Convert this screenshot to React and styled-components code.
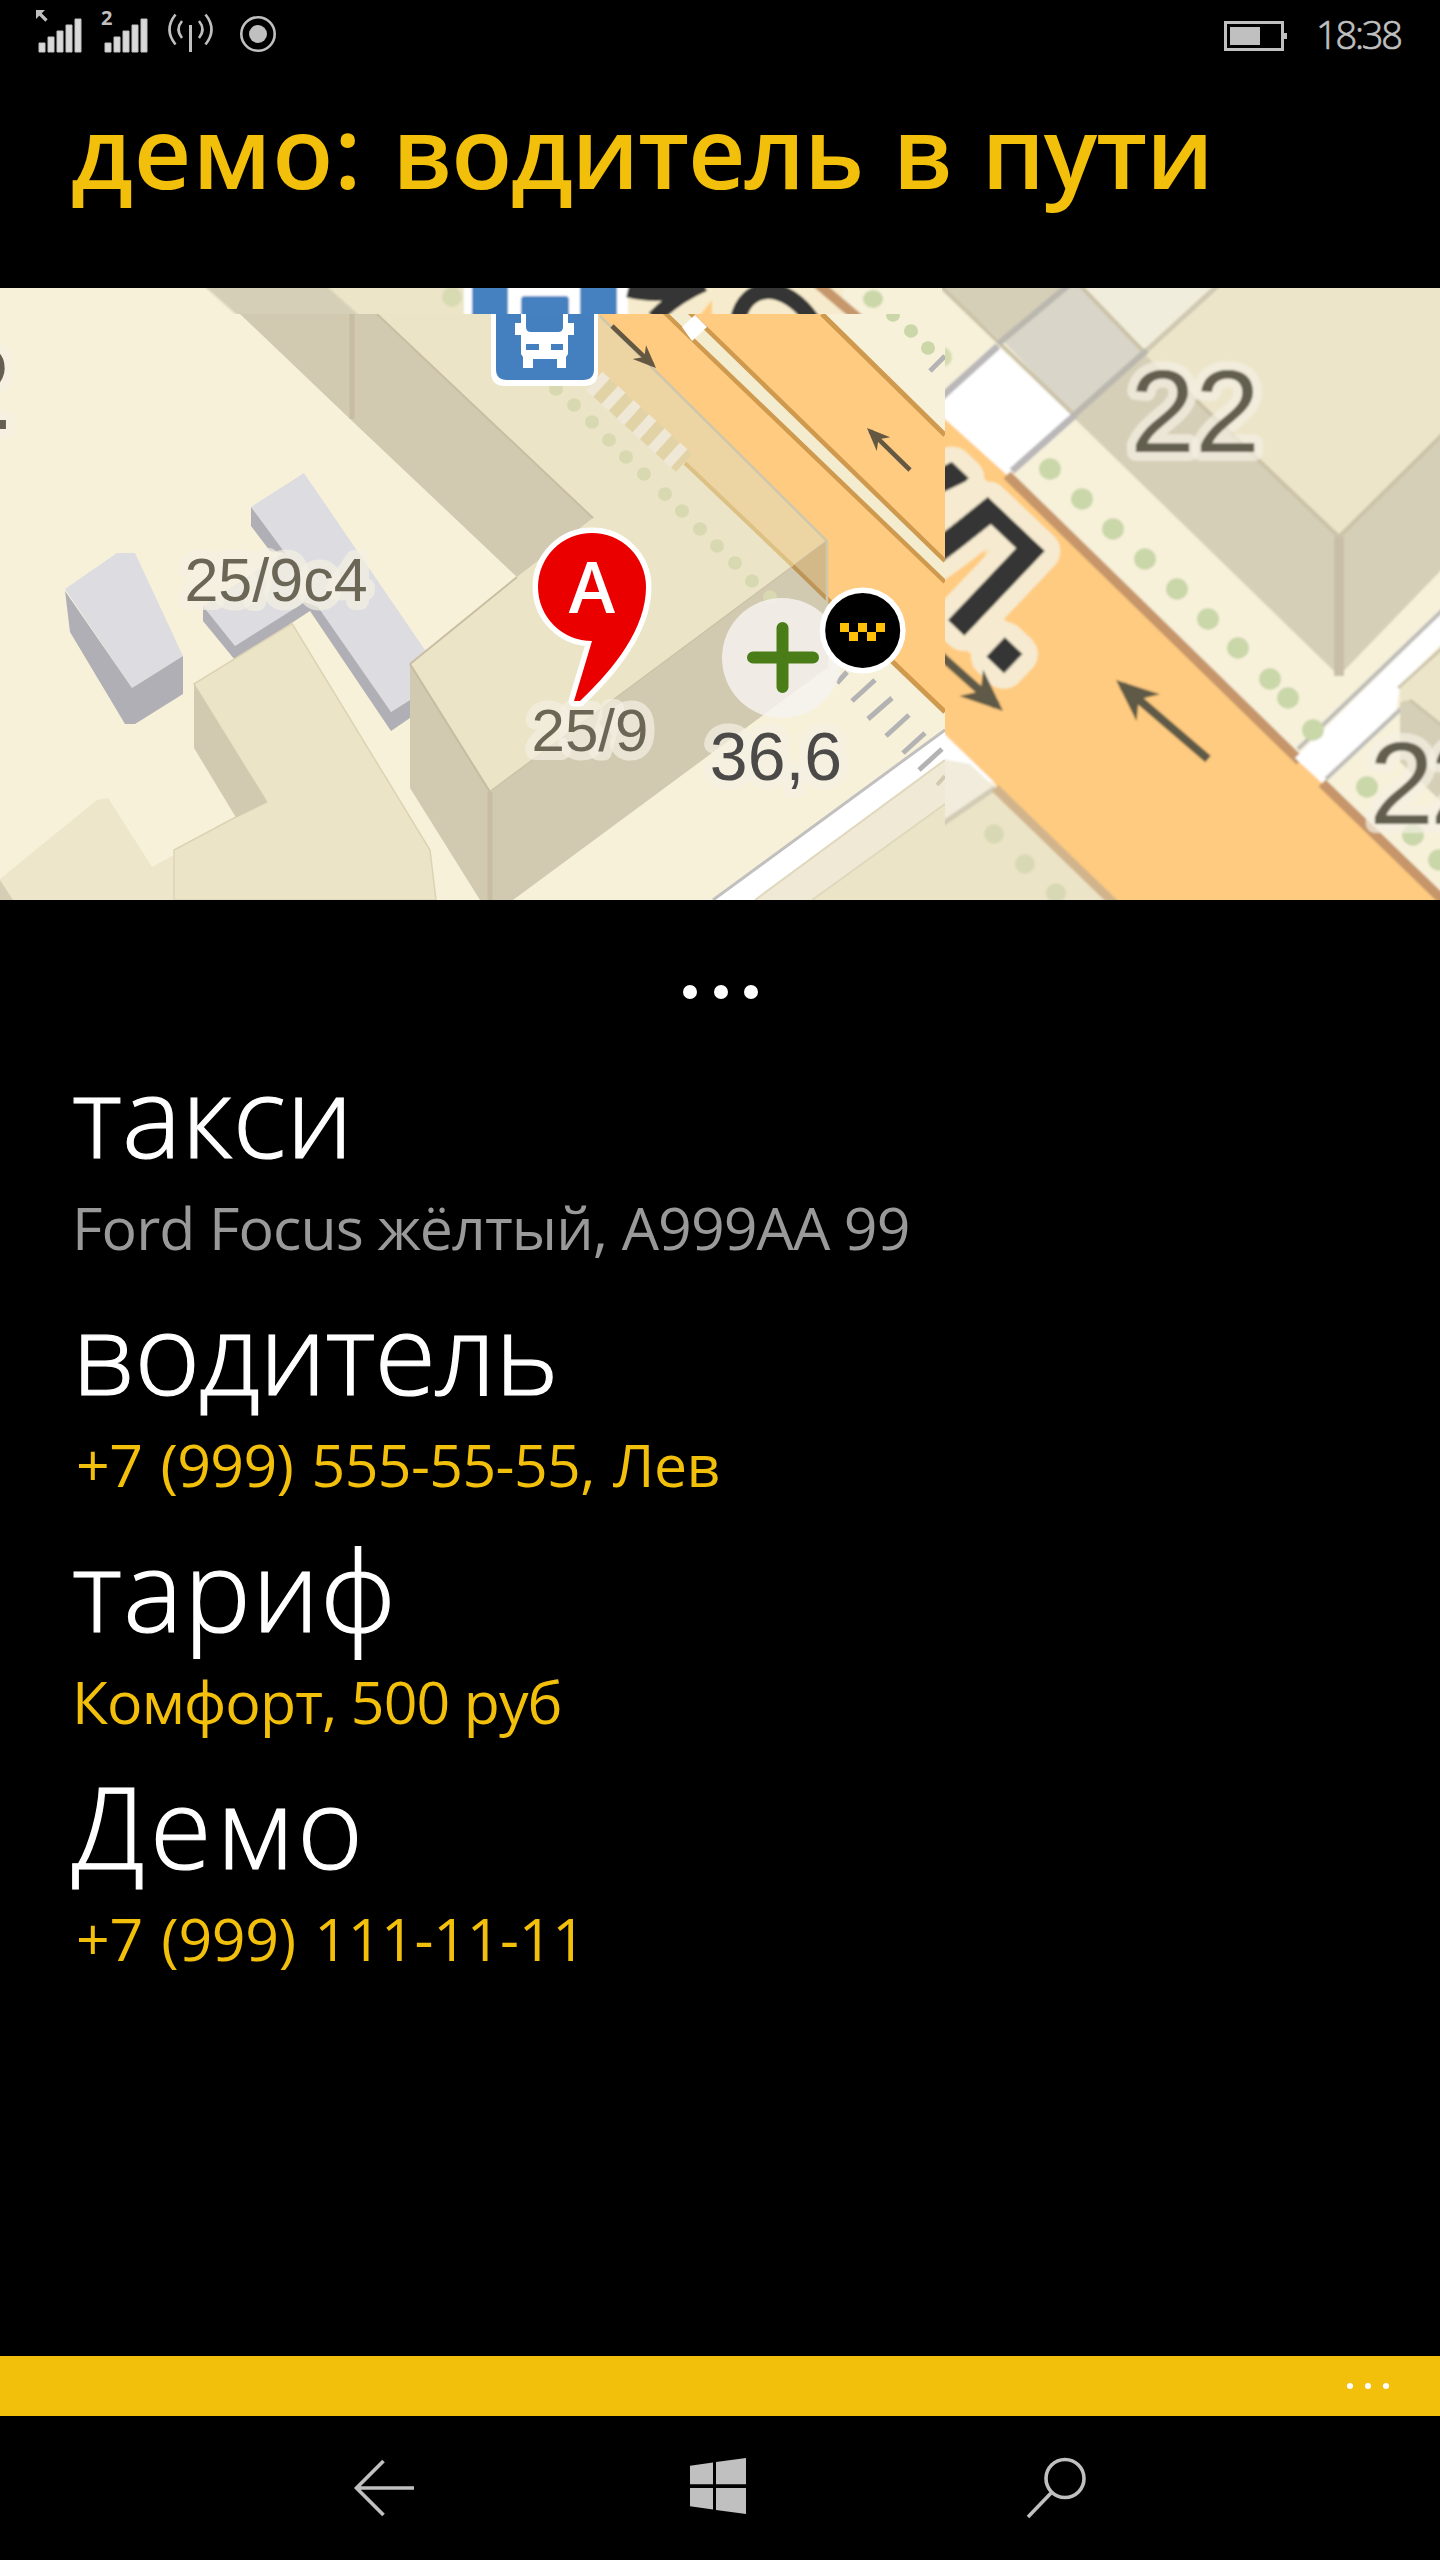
import React from 'react';
import styled, { createGlobalStyle } from 'styled-components';

const Global = createGlobalStyle`
  html, body { margin: 0; background: #000; }
  * { box-sizing: border-box; }
`;

const Screen = styled.div`
  width: 1440px;
  height: 2560px;
  background: #000;
  display: flex;
  flex-direction: column;
  overflow: hidden;
  font-family: "Open Sans", "Noto Sans", sans-serif;
`;

const StatusBar = styled.header`
  height: 68px;
  flex: none;
  display: flex;
  justify-content: space-between;
  padding: 0 36px;
`;

const StatusIcons = styled.svg`
  width: 260px;
  height: 68px;
`;

const StatusRight = styled.div`
  display: flex;
  gap: 28px;
`;

const Battery = styled.svg`
  width: 64px;
  height: 68px;
`;

const Clock = styled.time`
  width: 88px;
  color: #c0c0c0;
  font-size: 38px;
  font-weight: 300;
  -webkit-text-stroke: 0.7px #c0c0c0;
  line-height: 69px;
  letter-spacing: -2.2px;
  white-space: nowrap;
`;

const Title = styled.h1`
  flex: none;
  height: 220px;
  margin: 0;
  padding-left: 71px;
  color: #f2bf0b;
  font-size: 100px;
  font-weight: 600;
  line-height: 164px;
  letter-spacing: -1.3px;
  word-spacing: 5.2px;
  white-space: nowrap;
`;

const TitlePrefix = styled.span`
  letter-spacing: 0.9px;
`;

const MapView = styled.svg`
  display: block;
  flex: none;
  width: 1440px;
  height: 612px;
  font-family: "Liberation Sans", Arial, sans-serif;
`;

const Handle = styled.div`
  flex: none;
  height: 152px;
  padding: 85px 0 0 683px;
  display: flex;
  gap: 16.5px;
`;

const Dot = styled.span`
  width: ${(p) => p.$size}px;
  height: ${(p) => p.$size}px;
  border-radius: 50%;
  background: #fff;
`;

const Details = styled.main`
  flex: 1;
  padding-left: 72px;
`;

const Entry = styled.section`
  margin-bottom: 12px;
  white-space: nowrap;
`;

const EntryTitle = styled.h2`
  margin: 0;
  color: #fff;
  font-size: 112px;
  font-weight: 300;
  -webkit-text-stroke: 1.2px #fff;
  line-height: 125px;
  letter-spacing: ${(p) => p.$spacing}px;
`;

const EntryText = styled.p`
  margin: 0;
  padding-left: ${(p) => (p.$phone ? 4 : 0)}px;
  color: ${(p) => (p.$accent ? '#f2bf0b' : '#999')};
  font-size: 59px;
  line-height: 100px;
  letter-spacing: ${(p) => p.$spacing}px;
  word-spacing: ${(p) => (p.$phone ? 3.4 : 0)}px;
`;

const AppBar = styled.div`
  flex: none;
  height: 60px;
  background: #f2bf0b;
  display: flex;
  justify-content: flex-end;
  align-items: center;
  gap: 12px;
  padding-right: 51px;
`;

const NavBar = styled.nav`
  flex: none;
  height: 144px;
  display: flex;
  align-items: center;
  padding-left: 350px;
  gap: 270px;
`;

const NavIcon = styled.svg`
  width: 68px;
  height: 68px;
`;

const Dots = ({ points, r, fill }) =>
  points.map(([x, y]) => <ellipse key={`${x}-${y}`} cx={x} cy={y} rx={r} ry={r * 0.97} fill={fill} />);

const Arrow = ({ from, to, width, color }) => {
  const a = Math.atan2(to[1] - from[1], to[0] - from[0]) * (180 / Math.PI);
  const k = width;
  const len = Math.hypot(to[0] - from[0], to[1] - from[1]);
  return (
    <g transform={`translate(${to[0]} ${to[1]}) rotate(${a})`} fill={color}>
      <rect x={-len} y={-k / 2} width={len - k} height={k} />
      <path d={`M0 0 L${-k * 5} ${-k * 2.1} L${-k * 3.5} 0 L${-k * 5} ${k * 2.1} Z`} />
    </g>
  );
};

const Label = ({ x, y, size, color = '#6b6656', halo = 9, spacing = 0, children, anchor = 'middle' }) => (
  <text
    x={x}
    y={y}
    fontSize={size}
    letterSpacing={spacing}
    textAnchor={anchor}
    fill={color}
    stroke="#f3efe2"
    strokeOpacity="0.7"
    strokeWidth={halo * 2}
    strokeLinejoin="round"
    paintOrder="stroke"
  >
    {children}
  </text>
);

const StreetName = ({ x, y, size = 213, children }) => (
  <text
    transform={`translate(${x} ${y}) rotate(43.5)`}
    fontSize={size}
    fontWeight="400"
    textAnchor="end"
    fill="#363636"
    stroke="#f6ebd0"
    strokeWidth="42"
    strokeLinejoin="round"
    paintOrder="stroke"
    filter="url(#bolder)"
  >
    {children}
  </text>
);

function MainTile() {
  return (
    <g>
      <path d="M65 589 L117 553 L135 553 L183 656 L132 688Z" fill="#dddce1" />
      <path d="M65 591 L70 632 L125 724 L135 724 L183 694 V656 L132 688Z" fill="#b0afb5" />
      <path d="M0 879 L97 800 L108 798 L152 867 L174 855 V900 H10Z" fill="#ede6cb" />
      <path d="M0 880 L13 900 H0Z" fill="#d5ceb5" />

      <path d="M304 473 L425 650 L410 700 L391 712 L312 607 L308 601 L235 646 L203 606 L283 553 L251 507Z" fill="#dddce1" />
      <path d="M251 507 V526 L270 551 L285 553Z M203 606 V621 L235 660 L310 611 L391 731 L410 718 V700 L391 712 L318 607 L305 602 L235 646Z" fill="#b0afb5" />

      <path d="M194 684 L292 623.5 L430 850 L436 900 H174 V850 L236 817 L267 802Z" fill="#ebe4c6" stroke="#ddd3b4" strokeWidth="1.5" />
      <path d="M194 684 L267 802 L236 817.5 L194 748Z" fill="#d1c9b0" />

      <path d="M529 314 H945 V712 L685 463Z" fill="#ffcb80" />
      <path d="M823 314 H945 V436Z" fill="#f7f1da" />
      <path d="M822 314 L945 435" stroke="#cf994e" strokeWidth="5" />
      <path d="M665 312 L945 583 V561 L690 312Z" fill="#f4eccf" />
      <path d="M664 312 L945 582 M689 312 L945 561" stroke="#cf994e" strokeWidth="4.5" />
      <path d="M682 327 L695 315 L707 327 L692 341Z" fill="#fff" />
      <path d="M685 463 L945 712" stroke="#cf994e" strokeWidth="5" />

      <path d="M377 314 H529 L793 565 L490 792 L410 664 L517 577 L593 518Z" fill="#ebe4c6" />
      <path d="M529 314 H598 L827 541 L793 566Z" fill="#edd5a3" />
      <path d="M240 314 H377 L593 518 L517 577 L350 419Z" fill="#d1c9b0" />
      <path d="M377 314 L593 518 M490 792 L827 541 M410 664 L517 577" fill="none" stroke="#c9bea3" strokeWidth="2" />
      <path d="M352 314 V419" stroke="#c8bda3" strokeWidth="5" />
      <path d="M410 664 L490 792 V900 H480 L410 788Z" fill="#d1c9b0" />
      <path d="M490 792 L827 541 V668 L513 900 H490Z" fill="#d1c9b0" />
      <path d="M410 664 L490 792" stroke="#c8bda3" strokeWidth="2" />
      <path d="M793 566 L827 541 V599Z" fill="#d4b988" />
      <path d="M685 463 L793 566" stroke="#ddc083" strokeWidth="4" />
      <path d="M793 566 L827 599" stroke="#bd9559" strokeWidth="4" />
      <path d="M600 316 L827 541 V668" fill="none" stroke="#cfc7ab" strokeWidth="2.5" />
      <path d="M490 792 V900" stroke="#c8bda3" strokeWidth="5" />

      <path d="M594 381 L684 463" stroke="#e2d3a6" strokeWidth="24" />
      <path d="M594 381 L684 463" stroke="#efe8d6" strokeWidth="25" strokeDasharray="10 11" />
      <Dots
        r={7}
        fill="#d8d9b1"
        points={[[556, 389], [574, 405], [592, 422], [609, 440], [626, 457], [644, 474], [665, 494], [682, 511], [700, 529], [717, 546], [735, 563], [752, 581], [770, 597]]}
      />
      <Dots r={7} fill="#cbd7a9" points={[[893, 315], [911, 331], [928, 348]]} />
      <path d="M930 371 L945 356" stroke="#b5b3b4" strokeWidth="5" />

      <path d="M713 900 L945 730 V760 L755 900Z" fill="#fff" />
      <path d="M755 900 L945 760 V804 L812 900Z" fill="#f0e9d6" />
      <path d="M812 900 L945 804 V900Z" fill="#ebe4c6" />
      <path d="M713 900 L945 730" stroke="#c2c0bf" strokeWidth="3" />
      <path d="M755 900 L945 760 M812 900 L945 804" stroke="#e0d8bd" strokeWidth="2" />
      <path
        d="M837 683 L847 672 M852 701 L875 680 M868 719 L892 698 M886 736 L909 715 M903 753 L925 733 M919 770 L942 749"
        stroke="#b4b3b3"
        strokeWidth="5"
      />
      <path d="M937 785 L945 776" stroke="#d3c9b0" strokeWidth="4" />

      <Arrow from={[612, 326]} to={[656, 368]} width={4.6} color="#655842" />
      <Arrow from={[910, 470]} to={[867, 428]} width={4.6} color="#655842" />
    </g>
  );
}

function TopTile() {
  return (
    <g clipPath="url(#topTile)">
      <g filter="url(#soft)">
        <rect x="-10" y="278" width="965" height="46" fill="#f7f1da" />
        <path d="M195 278 H318 L358 314 L370 325 H248Z" fill="#d6cfb7" />
        <path d="M318 278 H480 V324 H370Z" fill="#ece5c8" />
        <circle cx="452" cy="297" r="10" fill="#d8dab2" />
        <rect x="464" y="278" width="170" height="46" fill="#fff" />
        <rect x="472" y="278" width="145" height="46" fill="#4480c0" />
        <path d="M508 278 H580 V324 H508Z" fill="#fff" />
        <rect x="521" y="296" width="48" height="28" rx="4" fill="#4480c0" />
        <rect x="628" y="278" width="215" height="46" fill="#f6ebcc" />
        <path d="M693 324 L712 300 V324Z" fill="#ffcb80" />
        <path d="M628 290 Q666 299 694 285 M704 284 Q676 296 654 318" fill="none" stroke="#353535" strokeWidth="15" />
        <path d="M738 320 C745 283 785 280 812 320" fill="none" stroke="#353535" strokeWidth="16" />
        <path d="M812 279 L864 323" stroke="#c7976c" strokeWidth="10" />
        <ellipse cx="873" cy="299" rx="10" ry="9" fill="#cbd7a9" />
      </g>
    </g>
  );
}

function RightTile() {
  return (
    <g clipPath="url(#rightTile)">
      <g filter="url(#soft)">
        <rect x="930" y="278" width="520" height="632" fill="#f7f1da" />
        <circle cx="942" cy="357" r="10" fill="#d6dcb0" />
        <path d="M935 409 L998 346 L1072 415 L1012 472 L1007 475 L935 412Z" fill="#fff" />
        <path d="M935 410 L1007 475 L1450 907 V910 H1123 L935 725Z" fill="#ffcb80" />
        <path d="M932 278 H1077 L1000 340Z" fill="#d6cfb7" />
        <path d="M1003 341 L1079 278 H1070 L1145 350 L1073 414Z" fill="#d9d5c9" />
        <path d="M1072 278 H1226 L1145 348Z" fill="#f1eddc" />
        <path d="M1226 278 H1450 V427 L1339 539 L1142 354Z" fill="#ece5c9" />
        <path d="M1142 352 L1339 537 L1450 426 V561 L1339 676 L1073 417Z" fill="#d6cfb7" />
        <path d="M932 278 L1073 414 M1073 278 L1142 350 M1180 385 L1339 537 L1450 427" fill="none" stroke="#cbc2a8" strokeWidth="4" />
        <path d="M1339 537 V676" stroke="#c9bfa7" strokeWidth="10" />
        <path d="M935 403 L998 346 M1012 471 L1075 415" stroke="#b9b7b8" strokeWidth="7" />
        <path d="M998 344 L1077 278 M1073 416 L1147 350" stroke="#bab7ae" strokeWidth="6" />
        <path d="M1147 350 L1226 278" stroke="#d0c9b2" strokeWidth="5" />

        <path d="M1007 475 L1300 761 M1322 783 L1452 909" stroke="#c6966b" strokeWidth="10" />
        <path d="M1295 758 L1450 605 V635 L1400 686 L1396 710 L1322 783Z" fill="#fff" />
        <path d="M1298 749 L1450 603 M1326 779 L1404 706" stroke="#bdbcb8" strokeWidth="4" />
        <path d="M1400 686 L1450 638 V736 L1400 700Z" fill="#ece5c9" />
        <path d="M1400 702 L1410 700 L1450 732 V810 L1400 762Z" fill="#d6cfb7" />
        <path d="M1398 688 L1450 641 M1410 700 L1450 732" stroke="#cbc3aa" strokeWidth="3" />
        <Dots
          r={11}
          fill="#cad7a9"
          points={[[1050, 469], [1082, 499], [1113, 529], [1145, 559], [1177, 589], [1208, 619], [1238, 648], [1270, 679], [1288, 698], [1313, 730], [1367, 787], [1413, 835], [1439, 860]]}
        />

        <path d="M935 725 L995 783 L935 768Z" fill="#fff" />
        <path d="M935 758 L970 764 L995 788 L935 830Z" fill="#f1ecdc" />
        <path d="M935 830 L995 790 L1123 910 H935Z" fill="#ebe4c6" />
        <path d="M935 829 L995 788" stroke="#d2cab5" strokeWidth="5" />
        <path d="M995 788 L1123 912" stroke="#d2b48c" strokeWidth="9" />
        <Dots r={10} fill="#d8d9b4" points={[[994, 834], [1025, 864], [1056, 893]]} />

        <StreetName x={1018} y={684}>ул.</StreetName>
        <Arrow from={[940, 655]} to={[1003, 711]} width={8.5} color="#5f5a46" />
        <Arrow from={[1208, 759]} to={[1116, 680]} width={8.5} color="#5f5a46" />
        <Label x={1195} y={452} size={117} color="#645f50">22</Label>
        <Label x={1369} y={824} size={117} spacing={-4} color="#645f50" anchor="start">22</Label>
      </g>
    </g>
  );
}

function BusStop() {
  return (
    <g>
      <path d="M491 314 H598 V372 Q598 386 584 386 H505 Q491 386 491 372Z" fill="#fff" />
      <path d="M496 314 H594 V369 Q594 380 583 380 H507 Q496 380 496 369Z" fill="#4480c0" />
      <path d="M521 314 H568 V323 H574 V335 H568 V354 L566 357 V368 H557 V359 H533 V368 H523 V357 L521 354Z M515 323 H521 V335 H515Z" fill="#fff" />
      <path d="M526 314 H563 V327 Q563 332 558 332 H531 Q526 332 526 327Z M526 344 H539 V350 H526Z M551 344 H563 V350 H551Z" fill="#4480c0" />
    </g>
  );
}

function Markers() {
  return (
    <g>
      <circle cx="782" cy="658" r="60" fill="#f6f2ef" fillOpacity="0.85" />
      <path d="M753 657.5 H813 M782.5 628 V687" stroke="#4a7d18" strokeWidth="12" strokeLinecap="round" />
      <Label x={590} y={751} size={60}>25/9</Label>
      <Label x={776} y={779.5} size={68} color="#4b4a49">36,6</Label>
      <path
        d="M592 641 A54 54 0 1 1 646 587 C646 628 615 668 580 701 H574 Z"
        fill="#eb0000"
        stroke="#fff"
        strokeWidth="11"
        strokeLinejoin="round"
        paintOrder="stroke"
      />
      <text x="592" y="613" textAnchor="middle" fill="#fff" fontFamily="Open Sans" fontWeight="600" fontSize="70">А</text>
      <circle cx="862.7" cy="630.4" r="43" fill="#fff" />
      <circle cx="862.7" cy="630.4" r="37.5" />
      <path d="M840 623h9v9h9v-9h9v9h9v-9h9v9h-9v9h-9v-9h-9v9h-9v-9h-9z" fill="#ffc107" />
    </g>
  );
}

const entries = [
  { title: 'такси', text: 'Ford Focus жёлтый, А999АА 99', titleSpacing: 0, spacing: -0.9 },
  { title: 'водитель', text: '+7 (999) 555-55-55, Лев', accent: true, phone: true, titleSpacing: -1, spacing: -0.6 },
  { title: 'тариф', text: 'Комфорт, 500 руб', accent: true, titleSpacing: 1.3, spacing: -0.9 },
  { title: 'Демо', text: '+7 (999) 111-11-11', accent: true, phone: true, titleSpacing: 5, spacing: -0.3 },
];

const Signal = ({ x }) => (
  <path
    d={`M${x} 43h6v9h-6z M${x + 9} 37h6v15h-6z M${x + 18} 31h6v21h-6z M${x + 27} 25h6v27h-6z M${x + 36} 19h6v33h-6z`}
    fill="#d9d9d9"
  />
);

export default function App() {
  return (
    <Screen>
      <Global />
      <StatusBar>
        <StatusIcons viewBox="36 0 260 68" fill="none" stroke="#c0c0c0">
          <path d="M46.5 20.5 L38 12" strokeWidth="3.2" />
          <path d="M36 10h9l-9 9z" fill="#c0c0c0" stroke="none" />
          <Signal x={39} />
          <text x="101" y="25" fontSize="20" fontWeight="700" fill="#c0c0c0" stroke="none">2</text>
          <Signal x={105} />
          <path d="M190.5 25 V52" strokeWidth="3" />
          <path d="M182 21 Q175 29.5 182 38 M199 21 Q206 29.5 199 38 M175.5 14.5 Q163.5 29.5 175.5 44.5 M205.5 14.5 Q217.5 29.5 205.5 44.5" strokeWidth="2.6" />
          <circle cx="258" cy="34" r="16.7" strokeWidth="2.6" />
          <circle cx="258" cy="34" r="9" fill="#c0c0c0" stroke="none" />
        </StatusIcons>
        <StatusRight>
          <Battery viewBox="1224 0 64 68">
            <rect x="1225.5" y="22.5" width="57" height="27" fill="none" stroke="#c0c0c0" strokeWidth="3" />
            <path d="M1230 27h30v18h-30z M1284 33h3v6h-3z" fill="#c0c0c0" />
          </Battery>
          <Clock>18:38</Clock>
        </StatusRight>
      </StatusBar>
      <Title>
        <TitlePrefix>демо:</TitlePrefix> водитель в пути
      </Title>
      <MapView viewBox="0 288 1440 612">
        <defs>
          <clipPath id="topTile"><rect x="0" y="288" width="942" height="26" /></clipPath>
          <clipPath id="rightTile"><path d="M942 288 H1440 V900 H945 V314 H942Z" /></clipPath>
          <filter id="soft" x="0" y="0" width="1" height="1"><feGaussianBlur stdDeviation="1.3" /></filter>
          <filter id="bolder" x="-0.2" y="-0.2" width="1.4" height="1.4">
            <feMorphology operator="erode" radius="1.6" />
          </filter>
        </defs>
        <rect y="288" width="1440" height="612" fill="#f7f1da" />
        <MainTile />
        <TopTile />
        <RightTile />
        <BusStop />
        <Label x={276} y={601} size={61}>25/9с4</Label>
        <Label x={12} y={429} size={118} anchor="end" color="#645f50">2</Label>
        <Markers />
      </MapView>
      <Handle>
        <Dot $size={14} />
        <Dot $size={14} />
        <Dot $size={14} />
      </Handle>
      <Details>
        {entries.map((e) => (
          <Entry key={e.title}>
            <EntryTitle $spacing={e.titleSpacing}>{e.title}</EntryTitle>
            <EntryText $accent={e.accent} $phone={e.phone} $spacing={e.spacing}>{e.text}</EntryText>
          </Entry>
        ))}
      </Details>
      <AppBar>
        <Dot $size={6} />
        <Dot $size={6} />
        <Dot $size={6} />
      </AppBar>
      <NavBar>
        <NavIcon viewBox="350 2454 68 68" fill="none" stroke="#c0c0c0" strokeWidth="3.6">
          <path d="M414 2488 H357 M383.5 2461 L356.5 2488 L383.5 2515" />
        </NavIcon>
        <NavIcon viewBox="688 2454 68 68" fill="#c0c0c0">
          <path d="M690 2465.7 L713 2462.5 V2484.3 H690Z M716 2462 L746 2458 V2484.3 H716Z M690 2488 H713 V2509.5 L690 2506.3Z M716 2488 H746 V2514 L716 2510Z" />
        </NavIcon>
        <NavIcon viewBox="1026 2454 68 68" fill="none" stroke="#c0c0c0" strokeWidth="3.6">
          <circle cx="1065" cy="2478.5" r="19" />
          <path d="M1052 2492 L1028 2517" />
        </NavIcon>
      </NavBar>
    </Screen>
  );
}
